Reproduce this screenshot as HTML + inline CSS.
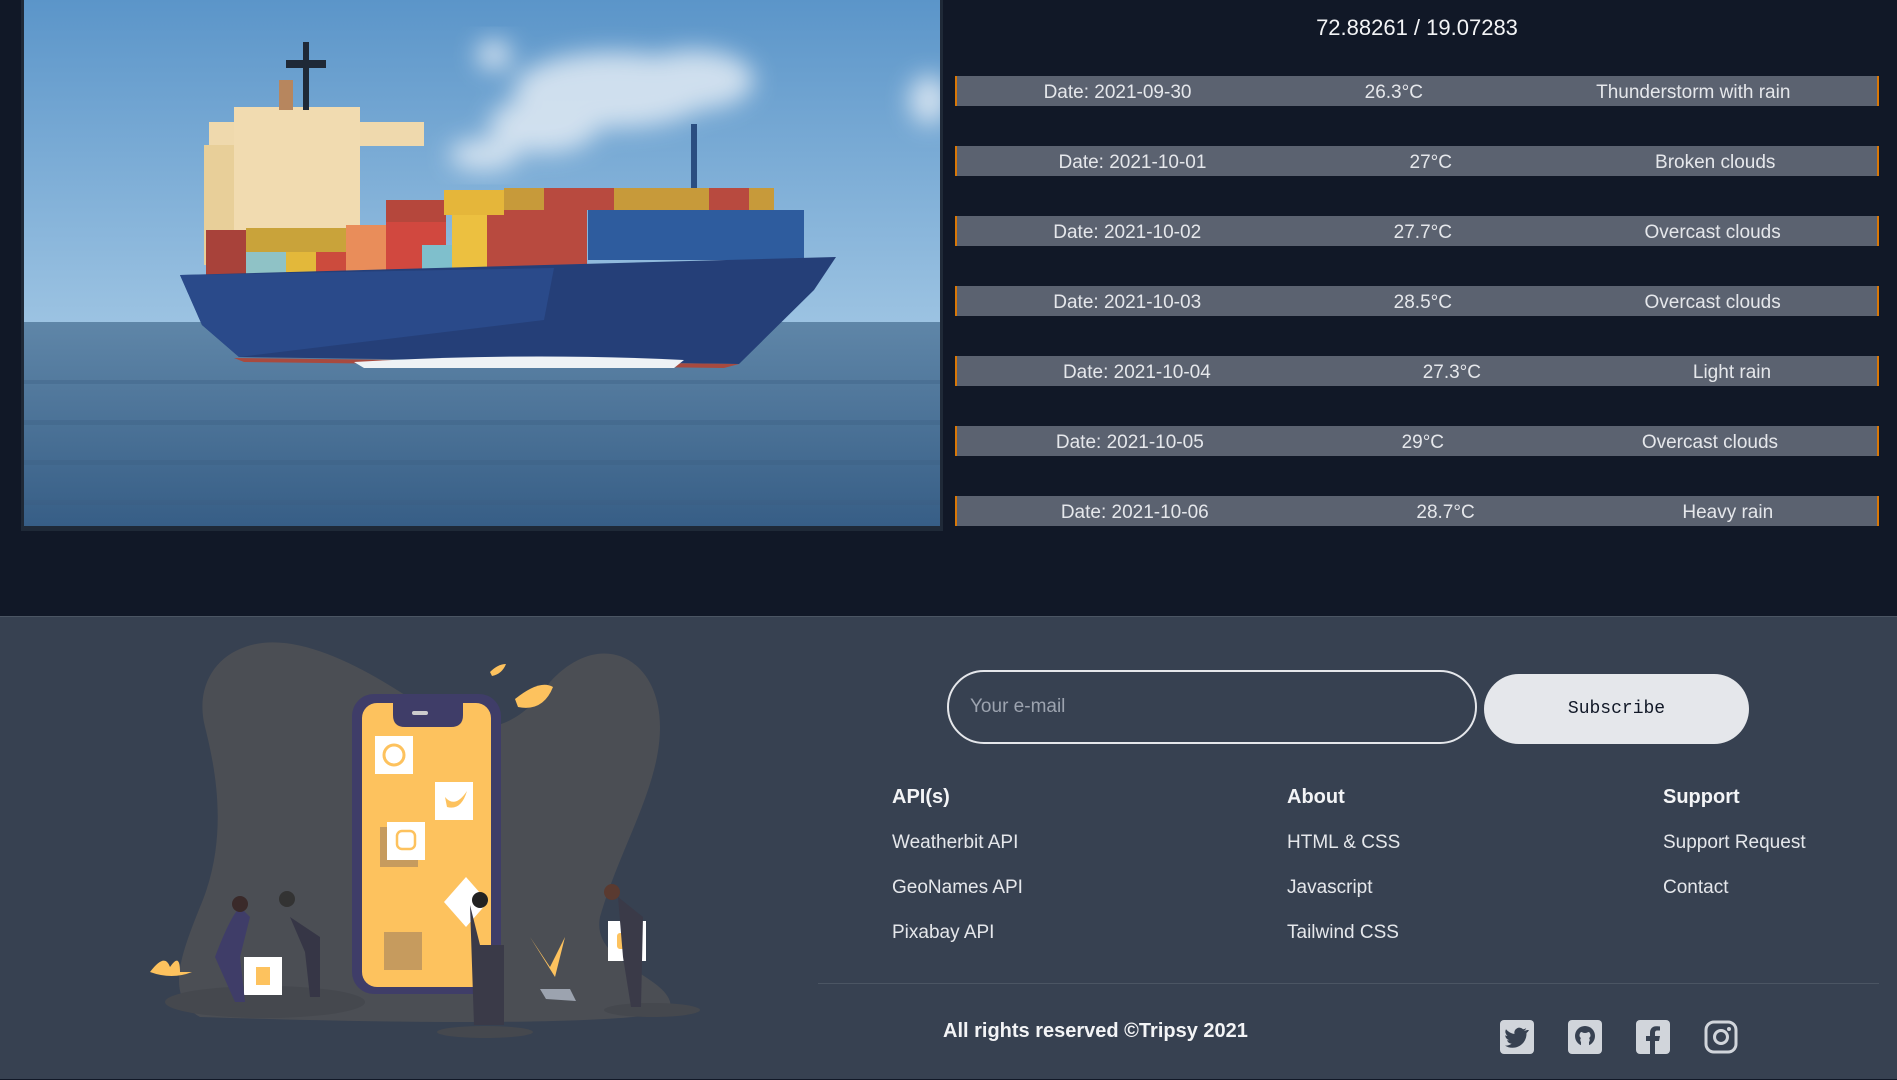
<!DOCTYPE html>
<html><head><meta charset="utf-8"><style>
*{margin:0;padding:0;box-sizing:border-box}
body{width:1897px;height:1079px;overflow:hidden;background:#111827;font-family:"Liberation Sans",sans-serif;position:relative}
.img{position:absolute;left:21px;top:0;width:922px;height:531px;background:#1f2937;padding:0 3px 5px 3px}
.coord{position:absolute;left:955px;width:924px;top:15px;text-align:center;color:#f3f4f6;font-size:22px}
.row{position:absolute;left:955px;width:924px;height:30px;background:#5b6270;border-left:2px solid #d97706;border-right:2px solid #d97706;display:flex;justify-content:space-around;align-items:center;color:#e5e7eb;font-size:19px;padding-top:3px}
footer{position:absolute;left:0;top:616px;width:1897px;height:463px;background:#374151;border-top:1px solid #4b5563}
.inp{position:absolute;left:947px;top:53px;width:530px;height:74px;border:2px solid #e5e7eb;border-radius:37px;color:#9ca3af;font-size:19px;padding:24px 0 0 21px}
.btn{position:absolute;left:1484px;top:57px;width:265px;height:70px;background:#e5e7eb;border-radius:35px;color:#111827;font-family:"Liberation Mono",monospace;font-size:18px;text-align:center;line-height:70px}
.col{position:absolute;top:169px;color:#e5e7eb;font-size:19px}
.col h4{font-size:20px;font-weight:bold;margin-bottom:23px;color:#f3f4f6}
.col div{margin-bottom:20px;height:25px}
.hr{position:absolute;left:818px;top:366px;width:1061px;height:1px;background:#4b5563}
.copy{position:absolute;left:943px;top:403px;color:#f3f4f6;font-size:20px;font-weight:bold}
.soc{position:absolute;top:403px;width:34px;height:34px}
</style></head><body>
<div class="img"><svg width="916" height="526" viewBox="0 0 916 526">
<defs><linearGradient id="sky" x1="0" y1="0" x2="0" y2="1"><stop offset="0" stop-color="#5b95c9"/><stop offset="1" stop-color="#9cc3e2"/></linearGradient>
<linearGradient id="sea" x1="0" y1="0" x2="0" y2="1"><stop offset="0" stop-color="#5f86a8"/><stop offset="1" stop-color="#375e86"/></linearGradient>
<filter id="bl"><feGaussianBlur stdDeviation="12"/></filter></defs>
<rect width="916" height="324" fill="url(#sky)"/>
<g fill="#e8eff6" opacity="0.8" filter="url(#bl)"><ellipse cx="590" cy="90" rx="100" ry="38"/><ellipse cx="520" cy="125" rx="55" ry="28"/><ellipse cx="670" cy="80" rx="60" ry="30"/><ellipse cx="470" cy="55" rx="18" ry="15"/><ellipse cx="905" cy="100" rx="20" ry="25"/><ellipse cx="460" cy="155" rx="35" ry="16"/></g>
<rect y="322" width="916" height="204" fill="url(#sea)"/>
<g fill="#3c5f82" opacity="0.35"><rect y="380" width="916" height="4"/><rect y="420" width="916" height="5"/><rect y="460" width="916" height="5"/><rect y="500" width="916" height="5"/></g>
<rect x="185" y="122" width="215" height="24" fill="#efd9ad"/>
<rect x="210" y="107" width="126" height="128" fill="#f1dbb0"/>
<rect x="180" y="145" width="30" height="120" fill="#e8cf99"/>
<rect x="279" y="42" width="6" height="68" fill="#1f2937"/>
<rect x="262" y="60" width="40" height="8" fill="#1f2937"/>
<rect x="255" y="80" width="14" height="30" fill="#b7865e"/>
<rect x="667" y="124" width="6" height="88" fill="#2a4d80"/>
<rect x="182" y="230" width="40" height="46" fill="#a8423a"/>
<rect x="222" y="228" width="100" height="48" fill="#c9a33a"/>
<rect x="222" y="252" width="40" height="24" fill="#8fc2c6"/>
<rect x="262" y="252" width="30" height="24" fill="#e3b83a"/>
<rect x="292" y="252" width="35" height="24" fill="#cc4b3d"/>
<rect x="322" y="225" width="40" height="51" fill="#e98d5a"/>
<rect x="362" y="205" width="60" height="71" fill="#d1483f"/>
<rect x="398" y="245" width="30" height="31" fill="#7fbfcc"/>
<rect x="428" y="215" width="35" height="61" fill="#ecc040"/>
<rect x="463" y="210" width="100" height="60" fill="#b84a3f"/>
<rect x="362" y="200" width="60" height="22" fill="#b5473c"/>
<rect x="420" y="190" width="60" height="25" fill="#e5b63a"/>
<rect x="480" y="188" width="270" height="22" fill="#c79a3a"/>
<rect x="520" y="188" width="70" height="22" fill="#b84a3f"/>
<rect x="685" y="188" width="40" height="22" fill="#b84a3f"/>
<rect x="564" y="210" width="216" height="50" fill="#2e5c9e"/>
<path d="M156 275 L812 257 L790 290 L715 364 L215 357 L178 325 Z" fill="#253f78"/>
<path d="M156 275 L530 268 L520 320 L215 357 L178 325Z" fill="#2a4a8a"/>
<path d="M210 358 L715 364 L700 368 L220 362Z" fill="#a84a3f"/>
<path d="M330 362 Q500 352 660 360 L650 368 L340 368Z" fill="#eef2f5"/>
</svg></div>
<div class="coord">72.88261 / 19.07283</div>
<div class="row" style="top:76px"><span>Date: 2021-09-30</span><span>26.3°C</span><span>Thunderstorm with rain</span></div>
<div class="row" style="top:146px"><span>Date: 2021-10-01</span><span>27°C</span><span>Broken clouds</span></div>
<div class="row" style="top:216px"><span>Date: 2021-10-02</span><span>27.7°C</span><span>Overcast clouds</span></div>
<div class="row" style="top:286px"><span>Date: 2021-10-03</span><span>28.5°C</span><span>Overcast clouds</span></div>
<div class="row" style="top:356px"><span>Date: 2021-10-04</span><span>27.3°C</span><span>Light rain</span></div>
<div class="row" style="top:426px"><span>Date: 2021-10-05</span><span>29°C</span><span>Overcast clouds</span></div>
<div class="row" style="top:496px"><span>Date: 2021-10-06</span><span>28.7°C</span><span>Heavy rain</span></div>
<footer>
<svg style="position:absolute;left:0;top:0" width="950" height="463" viewBox="0 0 950 463">
<path d="M245 30 C300 10 380 60 430 95 C480 125 520 110 550 65 C600 10 660 40 660 110 C660 170 620 230 600 300 C590 350 680 360 670 395 C600 410 350 405 200 400 C165 380 180 340 200 290 C230 220 215 150 205 110 C195 70 215 40 245 30Z" fill="#4b4e54"/>
<ellipse cx="265" cy="385" rx="100" ry="16" fill="#45484e"/>
<ellipse cx="652" cy="393" rx="48" ry="7" fill="#45484e"/>
<ellipse cx="485" cy="415" rx="48" ry="6" fill="#45484e"/>
<rect x="352" y="77" width="149" height="300" rx="22" fill="#3f3d68"/>
<rect x="362" y="86" width="129" height="284" rx="15" fill="#fdc25e"/>
<path d="M393 86 h70 v12 q0 12 -12 12 h-46 q-12 0 -12 -12z" fill="#3f3d68"/>
<rect x="412" y="94" width="16" height="4" rx="2" fill="#ccc"/>
<rect x="375" y="119" width="38" height="38" fill="#fff"/><circle cx="394" cy="138" r="10" fill="none" stroke="#fdc25e" stroke-width="3"/>
<rect x="435" y="165" width="38" height="38" fill="#fff"/><path d="M445 180 q10 12 22 -6 q-6 20 -20 16z" fill="#fdc25e"/>
<rect x="380" y="210" width="38" height="40" fill="#c69b5e"/><rect x="387" y="205" width="38" height="38" fill="#fff"/><rect x="397" y="214" width="18" height="18" rx="5" fill="none" stroke="#fdc25e" stroke-width="2.5"/>
<rect x="384" y="315" width="38" height="38" fill="#c69b5e"/>
<path d="M466 260 l22 25 l-22 25 l-22 -25z" fill="#fff"/>
<path d="M470 288 l10 40 h24 v80 h-30z" fill="#3a3a48"/><circle cx="480" cy="283" r="8" fill="#222"/>
<rect x="244" y="340" width="38" height="38" fill="#fff"/><rect x="256" y="350" width="14" height="18" fill="#fdc25e"/>
<path d="M215 340 q15 -40 25 -50 l10 10 l-10 40 l5 45 h-10z" fill="#3f3d68"/><circle cx="240" cy="287" r="8" fill="#3a2a2a"/>
<path d="M290 300 l30 20 l0 60 h-10 l-5 -45z" fill="#363646"/><circle cx="287" cy="282" r="8" fill="#333"/>
<rect x="608" y="304" width="38" height="40" fill="#fff"/><rect x="617" y="316" width="20" height="16" rx="3" fill="#fdc25e"/>
<path d="M618 280 l25 20 l-2 90 h-10 l-8 -50z" fill="#3a3a48"/><circle cx="612" cy="275" r="8" fill="#5a3a30"/>
<path d="M540 372 l30 0 l6 12 l-30 -2z" fill="#9ca3af"/>
<path d="M530 320 l25 40 l10 -40 l-15 30z" fill="#fdc25e"/>
<path d="M150 355 q15 -20 20 -5 q10 -15 10 5 h12 q-20 8 -42 0z" fill="#fdc25e"/>
<path d="M515 82 q25 -20 38 -12 q-10 25 -35 20z" fill="#fdc25e"/>
<path d="M490 55 q8 -8 16 -8 q-4 10 -14 12z" fill="#fdc25e"/>
</svg>
<div class="inp">Your e-mail</div>
<div class="btn">Subscribe</div>
<div class="col" style="left:892px"><h4>API(s)</h4><div>Weatherbit API</div><div>GeoNames API</div><div>Pixabay API</div></div>
<div class="col" style="left:1287px"><h4>About</h4><div>HTML &amp; CSS</div><div>Javascript</div><div>Tailwind CSS</div></div>
<div class="col" style="left:1663px"><h4>Support</h4><div>Support Request</div><div>Contact</div></div>
<div class="hr"></div>
<div class="copy">All rights reserved ©Tripsy 2021</div>
<svg class="soc" style="left:1500px" viewBox="0 0 34 34"><rect width="34" height="34" rx="4" fill="#d1d5db"/><path d="M27 10c-1 .5-2 .7-3 .8 1-.6 2-1.6 2.2-2.7-1 .6-2 1-3.2 1.2A5 5 0 0 0 14.5 14 14 14 0 0 1 6 9.2a5 5 0 0 0 1.5 6.6c-.8 0-1.6-.2-2.2-.6 0 2.400 1.700 4.400 4 4.900-.7.2-1.500.2-2.200.1.6 2 2.500 3.400 4.600 3.400A10 10 0 0 1 5 25.600 14 14 0 0 0 26.500 13.500V13c1-.7 1.800-1.700 2.500-3z" fill="#374151"/></svg>
<svg class="soc" style="left:1568px" viewBox="0 0 34 34"><rect width="34" height="34" rx="4" fill="#d1d5db"/><circle cx="17" cy="16" r="10" fill="#374151"/><path d="M13 26v-4c-1-1-1-3 0-4 -2 -1 -2-4 0-6 1 0 2 1 4 1s3-1 4-1c2 2 2 5 0 6 1 1 1 3 0 4v4z" fill="#d1d5db"/></svg>
<svg class="soc" style="left:1636px" viewBox="0 0 34 34"><rect width="34" height="34" rx="4" fill="#d1d5db"/><path d="M19 34V21h4l1-5h-5v-3c0-1.500.500-2.500 2.500-2.500H24V6.500c-.5 0-2-.2-3.700-.2-3.700 0-6.300 2.300-6.300 6.400V16h-4v5h4v13z" fill="#374151"/></svg>
<svg class="soc" style="left:1704px" viewBox="0 0 34 34"><rect x="2" y="2" width="30" height="30" rx="8" fill="none" stroke="#d1d5db" stroke-width="3"/><circle cx="17" cy="17" r="6.5" fill="none" stroke="#d1d5db" stroke-width="3"/><circle cx="25" cy="9" r="2" fill="#d1d5db"/></svg>
</footer>
</body></html>
